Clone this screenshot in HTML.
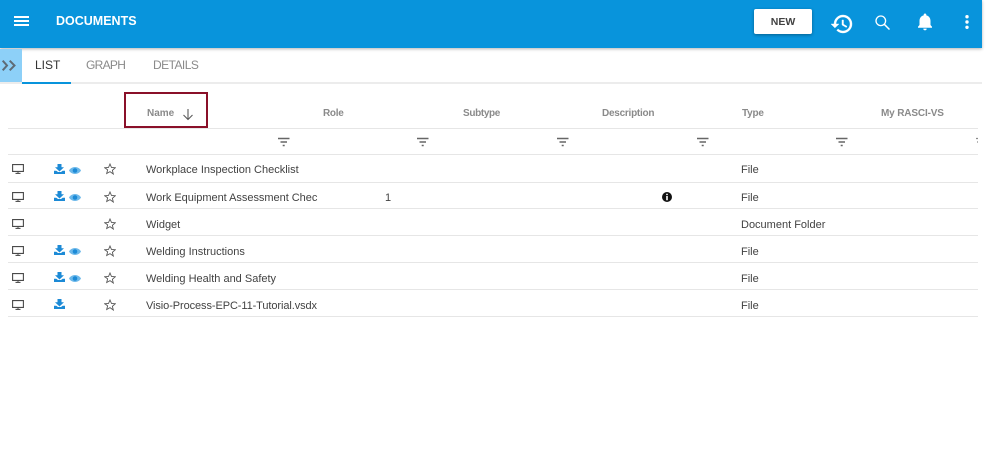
<!DOCTYPE html>
<html>
<head>
<meta charset="utf-8">
<style>
html,body{margin:0;padding:0;background:#fff}
body{width:1000px;height:474px;position:relative;overflow:hidden;font-family:"Liberation Sans",sans-serif}
.a{position:absolute;white-space:nowrap}
.hl{position:absolute;left:8px;width:970px;height:1px;background:#e6e6e6}
.th{position:absolute;top:108px;font-size:10px;font-weight:bold;color:#8a8a8a;line-height:12px;white-space:nowrap}
.td{position:absolute;font-size:11px;color:#424242;line-height:14px;white-space:nowrap}
.tab{position:absolute;top:58px;font-size:12px;line-height:14px;color:#8a8a8a;white-space:nowrap}
svg{position:absolute;overflow:visible}
</style>
</head>
<body>
<div class="a" style="left:0;top:0;width:982px;height:48px;background:#0894dc;box-shadow:0 1px 3px rgba(0,0,0,.3)"></div>

<!-- hamburger -->
<div class="a" style="left:14px;top:16px;width:15px;height:1.500px;background:#fff"></div>
<div class="a" style="left:14px;top:20px;width:15px;height:1.500px;background:#fff"></div>
<div class="a" style="left:14px;top:24px;width:15px;height:1.500px;background:#fff"></div>
<div class="a" style="left:56px;top:14px;font-size:12.500px;font-weight:bold;color:#fff;line-height:15px">DOCUMENTS</div>

<!-- NEW button -->
<div class="a" style="left:754px;top:9px;width:58px;height:25px;background:#fff;border-radius:2px;box-shadow:0 1px 3px rgba(0,0,0,.35);font-size:10.500px;font-weight:bold;color:#424242;text-align:center;line-height:26px">NEW</div>

<!-- history -->
<svg style="left:830px;top:12px" width="24" height="24" viewBox="0 0 24 24"><path fill="#fff" stroke="#fff" stroke-width=".4" d="M13 3a9 9 0 0 0-9 9H1l3.900 3.900L9 12H6a7 7 0 1 1 2.100 5l-1.400 1.400A9 9 0 1 0 13 3zm-1 5v5l4.300 2.500.7-1.200-3.500-2.100V8z"/></svg>
<!-- search -->
<svg style="left:875px;top:15px" width="15" height="15" viewBox="0 0 15 15"><circle cx="5.800" cy="5.800" r="4.800" fill="none" stroke="#fff" stroke-width="1.300"/><path d="M9.300 9.300L14.500 14.500" stroke="#fff" stroke-width="1.500" fill="none"/></svg>
<!-- bell -->
<svg style="left:916px;top:13px" width="18" height="18" viewBox="0 0 18 18"><path fill="#fff" d="M9 .5a1.300 1.300 0 0 0-1.300 1.300v.6C5 3 3.500 5.200 3.500 8v4L2 13.800v1h14v-1L14.500 12V8c0-2.800-1.500-5-4.200-5.600v-.6A1.300 1.300 0 0 0 9 .5zM7.300 15.600a1.700 1.700 0 0 0 3.400 0z"/></svg>
<!-- more -->
<svg style="left:964px;top:15px" width="6" height="14"><circle cx="3" cy="1.700" r="1.700" fill="#fff"/><circle cx="3" cy="7" r="1.700" fill="#fff"/><circle cx="3" cy="12.300" r="1.700" fill="#fff"/></svg>

<!-- side toggle -->
<div class="a" style="left:0;top:49px;width:22px;height:34px;background:#8dd0f8"></div>
<svg style="left:2px;top:60px" width="14" height="11"><path d="M.7 .7l4.300 4.800-4.300 4.800M7.700 .7l4.800 4.800-4.800 4.800" stroke="#5f6b75" stroke-width="2" fill="none"/></svg>

<!-- tabs -->
<div class="tab" style="left:35px;color:#333">LIST</div>
<div class="tab" style="left:86px;letter-spacing:-.7px">GRAPH</div>
<div class="tab" style="left:153px;letter-spacing:-.55px">DETAILS</div>
<div class="a" style="left:0;top:82px;width:982px;height:2px;background:#ececec"></div>
<div class="a" style="left:22px;top:82px;width:49px;height:2px;background:#0894dc"></div>

<!-- headers -->
<div class="th" style="left:147px">Name</div>
<svg style="left:182px;top:108px" width="12" height="13"><path d="M6 1v10.500M1.500 7L6 11.500 10.500 7" stroke="#5a5a5a" stroke-width="1.100" fill="none"/></svg>
<div class="th" style="left:323px;letter-spacing:-.3px">Role</div>
<div class="th" style="left:463px;letter-spacing:-.35px">Subtype</div>
<div class="th" style="left:602px;letter-spacing:-.25px">Description</div>
<div class="th" style="left:742px;letter-spacing:-.2px">Type</div>
<div class="th" style="left:881px;letter-spacing:-.15px">My RASCI-VS</div>

<!-- red box -->
<div class="a" style="left:124px;top:92px;width:80px;height:32px;border:2px solid #8a1029"></div>

<!-- lines -->
<div class="hl" style="top:128px"></div>
<div class="hl" style="top:154px"></div>
<div class="hl" style="top:182px"></div>
<div class="hl" style="top:208px"></div>
<div class="hl" style="top:235px"></div>
<div class="hl" style="top:262px"></div>
<div class="hl" style="top:289px"></div>
<div class="hl" style="top:316px"></div>

<!-- filter icons -->
<svg style="left:278px;top:137px" width="12" height="10"><path d="M0 1.500h11.500M2.500 5h6.500M4.700 8.500h2" stroke="#666" stroke-width="1.500" fill="none"/></svg>
<svg style="left:417px;top:137px" width="12" height="10"><path d="M0 1.500h11.500M2.500 5h6.500M4.700 8.500h2" stroke="#666" stroke-width="1.500" fill="none"/></svg>
<svg style="left:557px;top:137px" width="12" height="10"><path d="M0 1.500h11.500M2.500 5h6.500M4.700 8.500h2" stroke="#666" stroke-width="1.500" fill="none"/></svg>
<svg style="left:697px;top:137px" width="12" height="10"><path d="M0 1.500h11.500M2.500 5h6.500M4.700 8.500h2" stroke="#666" stroke-width="1.500" fill="none"/></svg>
<svg style="left:836px;top:137px" width="12" height="10"><path d="M0 1.500h11.500M2.500 5h6.500M4.700 8.500h2" stroke="#666" stroke-width="1.500" fill="none"/></svg>
<svg style="left:976px;top:137px" width="2" height="10"><path d="M0 1.500h2M1 5h1" stroke="#8a8a8a" stroke-width="1.300" fill="none"/></svg>

<svg width="0" height="0" style="position:absolute">
<symbol id="mon" viewBox="0 0 12 10"><path d="M.6.6h10.800v6.800H.6z" fill="none" stroke="#4a4a4a" stroke-width="1.100"/><path d="M3.500 9.400h5" stroke="#4a4a4a" stroke-width="1.100"/><path d="M6 7.500v2" stroke="#4a4a4a" stroke-width="1"/></symbol>
<symbol id="dl" viewBox="0 0 11 10"><path fill="#1c8ad6" d="M3.500 0h4v3.200h2.500L5.500 7.500 1 3.200h2.500zM0 6.800h2.300L4 8h3l1.700-1.200H11V10H0z"/></symbol>
<symbol id="eye" viewBox="0 0 12 7"><path fill="#6cb8ea" d="M6 0C3.300 0 1.100 1.500 0 3.500 1.100 5.500 3.300 7 6 7s4.900-1.500 6-3.500C10.900 1.500 8.700 0 6 0z"/><circle cx="6" cy="3.500" r="2.300" fill="#1c8ad6"/></symbol>
<symbol id="star" viewBox="0 0 12 12"><path d="M6 1l1.500 3.500 3.800.3-2.900 2.500.9 3.700L6 8.600 2.700 10.500l.9-3.700L.7 4.800l3.800-.3z" fill="none" stroke="#555" stroke-width=".9"/></symbol>
</svg>

<!-- row 1 -->
<svg style="left:12px;top:164px" width="12" height="10"><use href="#mon"/></svg>
<svg style="left:54px;top:164px" width="11" height="10"><use href="#dl"/></svg>
<svg style="left:69px;top:167px" width="12" height="7"><use href="#eye"/></svg>
<svg style="left:103.500px;top:163px" width="12" height="12"><use href="#star"/></svg>
<div class="td" style="left:146px;top:163px">Workplace Inspection Checklist</div>
<div class="td" style="left:741px;top:163px">File</div>

<!-- row 2 -->
<svg style="left:12px;top:192px" width="12" height="10"><use href="#mon"/></svg>
<svg style="left:54px;top:191px" width="11" height="10"><use href="#dl"/></svg>
<svg style="left:69px;top:194px" width="12" height="7"><use href="#eye"/></svg>
<svg style="left:103.500px;top:191px" width="12" height="12"><use href="#star"/></svg>
<div class="td" style="left:146px;top:191px;letter-spacing:-.03px">Work Equipment Assessment Chec</div>
<div class="td" style="left:385px;top:191px">1</div>
<svg style="left:662px;top:192px" width="10" height="10" viewBox="0 0 10 10"><circle cx="5" cy="5" r="5" fill="#111"/><path d="M4.200 1.800h1.600v1.300H4.200zM4.200 4h1.600v4.200H4.200z" fill="#fff"/></svg>
<div class="td" style="left:741px;top:191px">File</div>

<!-- row 3 -->
<svg style="left:12px;top:219px" width="12" height="10"><use href="#mon"/></svg>
<svg style="left:103.500px;top:218px" width="12" height="12"><use href="#star"/></svg>
<div class="td" style="left:146px;top:218px">Widget</div>
<div class="td" style="left:741px;top:218px">Document Folder</div>

<!-- row 4 -->
<svg style="left:12px;top:246px" width="12" height="10"><use href="#mon"/></svg>
<svg style="left:54px;top:245px" width="11" height="10"><use href="#dl"/></svg>
<svg style="left:69px;top:248px" width="12" height="7"><use href="#eye"/></svg>
<svg style="left:103.500px;top:245px" width="12" height="12"><use href="#star"/></svg>
<div class="td" style="left:146px;top:245px">Welding Instructions</div>
<div class="td" style="left:741px;top:245px">File</div>

<!-- row 5 -->
<svg style="left:12px;top:273px" width="12" height="10"><use href="#mon"/></svg>
<svg style="left:54px;top:272px" width="11" height="10"><use href="#dl"/></svg>
<svg style="left:69px;top:275px" width="12" height="7"><use href="#eye"/></svg>
<svg style="left:103.500px;top:272px" width="12" height="12"><use href="#star"/></svg>
<div class="td" style="left:146px;top:272px">Welding Health and Safety</div>
<div class="td" style="left:741px;top:272px">File</div>

<!-- row 6 -->
<svg style="left:12px;top:300px" width="12" height="10"><use href="#mon"/></svg>
<svg style="left:54px;top:299px" width="11" height="10"><use href="#dl"/></svg>
<svg style="left:103.500px;top:299px" width="12" height="12"><use href="#star"/></svg>
<div class="td" style="left:146px;top:299px;letter-spacing:-.09px">Visio-Process-EPC-11-Tutorial.vsdx</div>
<div class="td" style="left:741px;top:299px">File</div>
</body>
</html>
